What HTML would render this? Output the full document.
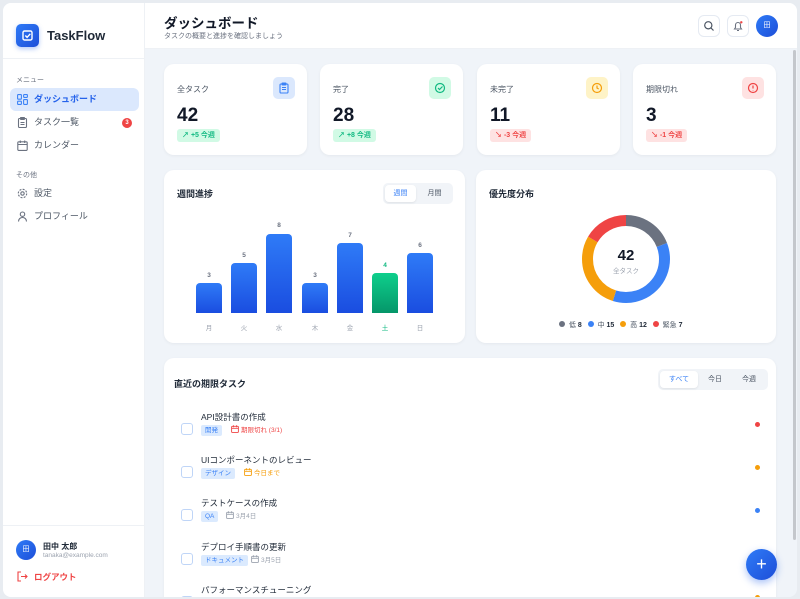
<!DOCTYPE html>
<html><head><meta charset="utf-8"><style>
*{box-sizing:border-box;margin:0;padding:0}
body{width:800px;height:599px;overflow:hidden;background:#e8ecf1;font-family:"Liberation Sans","Noto Sans CJK JP",sans-serif;color:#1f2937;position:relative}
.abs{position:absolute}
.frame{position:absolute;left:3px;top:3px;width:794px;height:594px;border-radius:8px;overflow:hidden;background:#f0f4f9}
.side{position:absolute;left:0;top:0;width:142px;height:594px;background:#fff;border-right:1px solid #eef1f5}
.hdr{position:absolute;left:142px;top:0;width:652px;height:46px;background:#fff;border-bottom:1px solid #eef1f5}
.card{position:absolute;background:#fff;border-radius:10px;box-shadow:0 1px 3px rgba(0,0,0,.05)}
.nav{position:absolute;left:7px;width:129px;height:23px;border-radius:6px;font-size:9px;color:#4b5563;line-height:23px;padding-left:24px}
.nav svg{position:absolute;left:7px;top:6px}
.sec{position:absolute;left:13px;font-size:7px;color:#6b7280}
.lbl{font-size:8px;color:#4b5563;position:absolute;left:13px;top:20px}
.num{font-size:19px;font-weight:bold;color:#111827;position:absolute;left:13px;top:41px}
.ico{position:absolute;right:12px;top:13px;width:22px;height:22px;border-radius:5px}
.pill{position:absolute;left:13px;top:65px;height:13px;border-radius:3px;font-size:7px;line-height:13px;padding:0 5px;font-weight:bold}
.bar{position:absolute;width:26px;border-radius:4px 4px 0 0;background:linear-gradient(#2f7bf7,#1a4de0)}
.bv{position:absolute;width:26px;text-align:center;font-size:6.5px;color:#6b7280;font-weight:bold}
.dl{position:absolute;width:26px;text-align:center;font-size:6.5px;color:#9ca3af;top:319px}
.row{position:absolute;left:0;width:612px;height:43px}
.cb{position:absolute;left:17px;top:15px;width:12px;height:12px;border:1.3px solid #bfd5f7;border-radius:3px}
.tt{position:absolute;left:37px;top:3px;font-size:8.5px;color:#1f2937}
.tag{position:absolute;left:37px;top:17px;height:11px;background:#dbeafe;color:#3b82f6;font-size:6.5px;line-height:11px;padding:0 4px;border-radius:2px}
.due{position:absolute;top:17px;font-size:6.5px;line-height:11px;white-space:nowrap}
.due svg{vertical-align:-1px;margin-right:2px}
.dot{position:absolute;left:591px;top:14px;width:5px;height:5px;border-radius:50%}
.tab{position:absolute;font-size:7px;text-align:center;line-height:17px;height:17px}
.ld{display:inline-block;width:6px;height:6px;border-radius:50%;vertical-align:0;margin-right:2px}
</style></head><body>
<svg width="0" height="0" style="position:absolute"><defs><symbol id="cal" viewBox="0 0 8 8"><rect x=".6" y="1.3" width="6.8" height="6.1" rx=".8" fill="none" stroke="currentColor" stroke-width=".9"/><path d="M.6 3.3h6.8M2.4.3v2M5.6.3v2" stroke="currentColor" stroke-width=".9"/></symbol></defs></svg>
<div class="frame">
 <div class="side">
  <div class="abs" style="left:13px;top:21px;width:23px;height:23px;border-radius:5px;background:linear-gradient(135deg,#2f7bf7,#1d4ed8);box-shadow:0 2px 5px rgba(37,99,235,.35)">
   <svg width="23" height="23" viewBox="0 0 23 23"><rect x="7" y="7" width="9" height="9" rx="1.5" fill="none" stroke="#fff" stroke-width="1.4"/><path d="M9.3 11.5l1.8 1.8 3.2-3.5" fill="none" stroke="#fff" stroke-width="1.4"/></svg>
  </div>
  <div class="abs" style="left:44px;top:25px;font-size:13px;font-weight:bold;color:#1f2937">TaskFlow</div>
  <div class="abs" style="left:0;top:55px;width:142px;height:1px;background:#eef1f5"></div>
  <div class="sec" style="top:72px">メニュー</div>
  <div class="nav" style="top:85px;background:#dbe8fd;color:#2563eb;font-weight:bold"><svg width="11" height="11" viewBox="0 0 11 11" fill="none" stroke="#3b82f6" stroke-width="1.1"><rect x=".6" y=".6" width="3.8" height="4.6" rx=".6"/><rect x="6.6" y=".6" width="3.8" height="2.8" rx=".6"/><rect x="6.6" y="5.6" width="3.8" height="4.8" rx=".6"/><rect x=".6" y="7.2" width="3.8" height="3.2" rx=".6"/></svg>ダッシュボード</div>
  <div class="nav" style="top:108px"><svg width="11" height="11" viewBox="0 0 11 11" fill="none" stroke="#6b7280" stroke-width="1.1"><rect x="1.5" y="1.5" width="8" height="9" rx="1"/><rect x="3.5" y=".5" width="4" height="2" rx=".5"/><path d="M3.5 5.5h4M3.5 7.5h4"/></svg>タスク一覧<span class="abs" style="right:7px;top:7px;width:10px;height:10px;border-radius:50%;background:#ef4444;color:#fff;font-size:6px;line-height:10px;text-align:center;font-weight:bold">3</span></div>
  <div class="nav" style="top:131px"><svg width="11" height="11" viewBox="0 0 11 11" fill="none" stroke="#6b7280" stroke-width="1.1"><rect x=".8" y="1.8" width="9.4" height="8.6" rx="1"/><path d="M.8 4.5h9.4M3.3.5v2.5M7.7.5v2.5"/></svg>カレンダー</div>
  <div class="sec" style="top:167px">その他</div>
  <div class="nav" style="top:179px"><svg width="11" height="11" viewBox="0 0 11 11" fill="none" stroke="#6b7280" stroke-width="1.1"><circle cx="5.5" cy="5.5" r="1.7"/><circle cx="5.5" cy="5.5" r="4.2" stroke-dasharray="2 1.3"/></svg>設定</div>
  <div class="nav" style="top:202px"><svg width="11" height="11" viewBox="0 0 11 11" fill="none" stroke="#6b7280" stroke-width="1.1"><circle cx="5.5" cy="3.2" r="2.2"/><path d="M1.5 10.5c0-2.5 1.8-4 4-4s4 1.5 4 4"/></svg>プロフィール</div>
  <div class="abs" style="left:0;top:522px;width:142px;height:1px;background:#eef1f5"></div>
  <div class="abs" style="left:13px;top:537px;width:20px;height:20px;border-radius:50%;background:linear-gradient(135deg,#2f7bf7,#1d4ed8);color:#fff;font-size:7px;text-align:center;line-height:20px">田</div>
  <div class="abs" style="left:40px;top:538px;font-size:8px;font-weight:bold">田中 太郎</div>
  <div class="abs" style="left:40px;top:549px;font-size:6.5px;color:#9ca3af">tanaka@example.com</div>
  <svg class="abs" style="left:14px;top:568px" width="11" height="11" viewBox="0 0 11 11" fill="none" stroke="#ef4444" stroke-width="1.1"><path d="M4 1H1v9h3M4 5.5h6M8 3.5l2 2-2 2"/></svg>
  <div class="abs" style="left:31px;top:568px;font-size:8.5px;color:#ef4444;font-weight:bold">ログアウト</div>
 </div>
 <div class="hdr">
  <div class="abs" style="left:19px;top:9px;font-size:13.5px;font-weight:bold;color:#111827">ダッシュボード</div>
  <div class="abs" style="left:19px;top:28px;font-size:7px;color:#6b7280">タスクの概要と進捗を確認しましょう</div>
  <div class="abs" style="left:553px;top:12px;width:22px;height:22px;border:1px solid #e5eaf2;border-radius:6px"><svg width="20" height="20" viewBox="0 0 20 20" fill="none" stroke="#4b5563" stroke-width="1.2"><circle cx="9.3" cy="9.3" r="3.6"/><path d="M12 12l2.5 2.5"/></svg></div>
  <div class="abs" style="left:582px;top:12px;width:22px;height:22px;border:1px solid #e5eaf2;border-radius:6px"><svg width="20" height="20" viewBox="0 0 20 20" fill="none" stroke="#6b7280" stroke-width="1.1"><path d="M6.5 13h7l-1-1.5V9a2.5 2.5 0 0 0-5 0v2.5zM9 14.5h2"/><circle cx="13.3" cy="6.3" r="1.2" fill="#ef4444" stroke="none"/></svg></div>
  <div class="abs" style="left:611px;top:12px;width:22px;height:22px;border-radius:50%;background:linear-gradient(135deg,#2f7bf7,#1d4ed8);color:#fff;font-size:7px;text-align:center;line-height:22px">田</div>
 </div>
 <div class="abs" style="left:790px;top:47px;width:3px;height:490px;background:#c4c7cc;border-radius:2px"></div>

 <div class="card" style="left:161px;top:61px;width:143px;height:91px"><div class="lbl">全タスク</div><div class="ico" style="background:#dbe8fd"><svg width="22" height="22" viewBox="0 0 22 22" fill="none" stroke="#3b82f6" stroke-width="1.1"><rect x="7" y="7" width="8" height="9" rx="1"/><rect x="9" y="6" width="4" height="2" rx=".5"/><path d="M9 10.5h4M9 12.5h4"/></svg></div><div class="num">42</div><div class="pill" style="background:#d1fae5;color:#10b981">↗ +5 今週</div></div>
 <div class="card" style="left:317px;top:61px;width:143px;height:91px"><div class="lbl">完了</div><div class="ico" style="background:#d1fae5"><svg width="22" height="22" viewBox="0 0 22 22" fill="none" stroke="#10b981" stroke-width="1.2"><circle cx="11" cy="11" r="4.5"/><path d="M9 11l1.5 1.5 3-3"/></svg></div><div class="num">28</div><div class="pill" style="background:#d1fae5;color:#10b981">↗ +8 今週</div></div>
 <div class="card" style="left:474px;top:61px;width:143px;height:91px"><div class="lbl">未完了</div><div class="ico" style="background:#fef3c7"><svg width="22" height="22" viewBox="0 0 22 22" fill="none" stroke="#f59e0b" stroke-width="1.2"><circle cx="11" cy="11" r="4.5"/><path d="M11 8.5V11l1.7 1"/></svg></div><div class="num">11</div><div class="pill" style="background:#fee2e2;color:#ef4444">↘ -3 今週</div></div>
 <div class="card" style="left:630px;top:61px;width:143px;height:91px"><div class="lbl">期限切れ</div><div class="ico" style="background:#fee2e2"><svg width="22" height="22" viewBox="0 0 22 22" fill="none" stroke="#ef4444" stroke-width="1.2"><circle cx="11" cy="11" r="4.5"/><path d="M11 8.5v3M11 13v.4"/></svg></div><div class="num">3</div><div class="pill" style="background:#fee2e2;color:#ef4444">↘ -1 今週</div></div>

 <div class="card" style="left:161px;top:167px;width:301px;height:173px">
  <div class="abs" style="left:13px;top:17px;font-size:9px;font-weight:bold">週間進捗</div>
  <div class="abs" style="left:219px;top:13px;width:70px;height:21px;background:#f1f4f8;border-radius:5px">
   <div class="tab" style="left:2px;top:2px;width:31px;background:#fff;border-radius:4px;color:#3b82f6;box-shadow:0 1px 2px rgba(0,0,0,.08)">週間</div>
   <div class="tab" style="left:36px;top:2px;width:31px;color:#4b5563">月間</div>
  </div>
 </div>
 <div class="bar" style="left:193px;top:280px;height:30px"></div><div class="bv" style="left:193px;top:269px">3</div><div class="dl" style="left:193px">月</div>
 <div class="bar" style="left:228px;top:260px;height:50px"></div><div class="bv" style="left:228px;top:249px">5</div><div class="dl" style="left:228px">火</div>
 <div class="bar" style="left:263px;top:231px;height:79px"></div><div class="bv" style="left:263px;top:219px">8</div><div class="dl" style="left:263px">水</div>
 <div class="bar" style="left:299px;top:280px;height:30px"></div><div class="bv" style="left:299px;top:269px">3</div><div class="dl" style="left:299px">木</div>
 <div class="bar" style="left:334px;top:240px;height:70px"></div><div class="bv" style="left:334px;top:229px">7</div><div class="dl" style="left:334px">金</div>
 <div class="bar" style="left:369px;top:270px;height:40px;background:linear-gradient(#0ecf8c,#059669)"></div><div class="bv" style="left:369px;top:259px;color:#10b981">4</div><div class="dl" style="left:369px;color:#10b981">土</div>
 <div class="bar" style="left:404px;top:250px;height:60px"></div><div class="bv" style="left:404px;top:239px">6</div><div class="dl" style="left:404px">日</div>

 <div class="card" style="left:473px;top:167px;width:300px;height:173px">
  <div class="abs" style="left:13px;top:17px;font-size:9px;font-weight:bold">優先度分布</div>
  <svg class="abs" style="left:105px;top:44px" width="90" height="90" viewBox="0 0 90 90">
   <g transform="rotate(-90 45 45)" fill="none" stroke-width="11">
    <circle cx="45" cy="45" r="38.5" stroke="#6b7280" stroke-dasharray="46.1 300" stroke-dashoffset="0"/>
    <circle cx="45" cy="45" r="38.5" stroke="#3b82f6" stroke-dasharray="86.4 300" stroke-dashoffset="-46.1"/>
    <circle cx="45" cy="45" r="38.5" stroke="#f59e0b" stroke-dasharray="69.1 300" stroke-dashoffset="-132.5"/>
    <circle cx="45" cy="45" r="38.5" stroke="#ef4444" stroke-dasharray="40.3 300" stroke-dashoffset="-201.6"/>
   </g>
  </svg>
  <div class="abs" style="left:105px;top:77px;width:90px;text-align:center;font-size:15px;font-weight:bold;color:#111827">42</div>
  <div class="abs" style="left:105px;top:95px;width:90px;text-align:center;font-size:6.5px;color:#9ca3af">全タスク</div>
  <div class="abs" style="left:83px;top:150px;font-size:7px;color:#4b5563;white-space:nowrap">
   <span class="ld" style="background:#6b7280"></span> 低 <b style="color:#1f2937">8</b>&nbsp;&nbsp; <span class="ld" style="background:#3b82f6"></span> 中 <b style="color:#1f2937">15</b>&nbsp;&nbsp; <span class="ld" style="background:#f59e0b"></span> 高 <b style="color:#1f2937">12</b>&nbsp;&nbsp; <span class="ld" style="background:#ef4444"></span> 緊急 <b style="color:#1f2937">7</b>
  </div>
 </div>

 <div class="card" style="left:161px;top:355px;width:612px;height:260px">
  <div class="abs" style="left:10px;top:19px;font-size:9px;font-weight:bold">直近の期限タスク</div>
  <div class="abs" style="left:494px;top:11px;width:110px;height:21px;background:#f1f4f8;border-radius:5px">
   <div class="tab" style="left:2px;top:2px;width:38px;background:#fff;border-radius:4px;color:#3b82f6;box-shadow:0 1px 2px rgba(0,0,0,.08)">すべて</div>
   <div class="tab" style="left:40px;top:2px;width:34px;color:#4b5563">今日</div>
   <div class="tab" style="left:74px;top:2px;width:34px;color:#4b5563">今週</div>
  </div>
  <div class="row" style="top:50px"><div class="cb"></div><div class="tt">API設計書の作成</div><div class="tag">開発</div><div class="due" style="left:67px;color:#ef4444"><svg width="8" height="8"><use href="#cal"/></svg>期限切れ (3/1)</div><div class="dot" style="background:#ef4444"></div></div>
  <div class="row" style="top:93px"><div class="cb"></div><div class="tt">UIコンポーネントのレビュー</div><div class="tag">デザイン</div><div class="due" style="left:80px;color:#f59e0b"><svg width="8" height="8"><use href="#cal"/></svg>今日まで</div><div class="dot" style="background:#f59e0b"></div></div>
  <div class="row" style="top:136px"><div class="cb"></div><div class="tt">テストケースの作成</div><div class="tag">QA</div><div class="due" style="left:62px;color:#9ca3af"><svg width="8" height="8"><use href="#cal"/></svg>3月4日</div><div class="dot" style="background:#3b82f6"></div></div>
  <div class="row" style="top:180px"><div class="cb"></div><div class="tt">デプロイ手順書の更新</div><div class="tag">ドキュメント</div><div class="due" style="left:87px;color:#9ca3af"><svg width="8" height="8"><use href="#cal"/></svg>3月5日</div><div class="dot" style="background:#6b7280"></div></div>
  <div class="row" style="top:223px"><div class="cb"></div><div class="tt">パフォーマンスチューニング</div><div class="dot" style="background:#f59e0b"></div></div>
 </div>
 <div class="abs" style="left:743px;top:546px;width:31px;height:31px;border-radius:50%;background:linear-gradient(135deg,#2f7bf7,#1d4ed8);box-shadow:0 3px 8px rgba(37,99,235,.4);color:#fff;font-size:18px;line-height:30px;text-align:center">+</div>
</div>
</body></html>
